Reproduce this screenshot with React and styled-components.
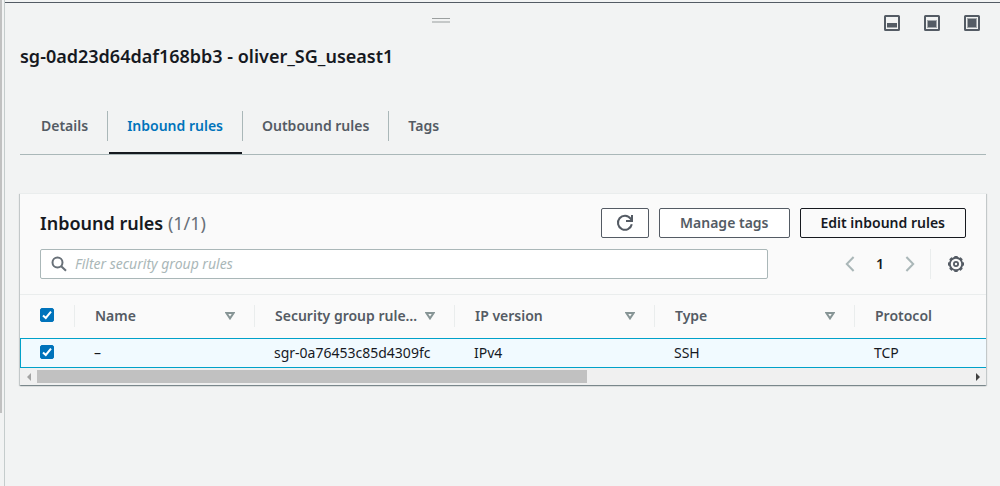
import React, { useState } from "react";
import styled, { createGlobalStyle, css } from "styled-components";

const GlobalStyle = createGlobalStyle`
  *, *::before, *::after { box-sizing: border-box; }
  body {
    margin: 0;
    background: #f2f3f3;
    color: #16191f;
    font-family: "Noto Sans", "Open Sans", sans-serif;
    font-size: 14px;
    line-height: 22px;
  }
  button, input { font: inherit; }
`;

const Page = styled.div`
  display: flex;
  min-height: 100vh;
  overflow: hidden;
`;

const Gutter = styled.div`
  flex: none;
  width: 5px;
  border-right: 1px solid #c5cccc;
`;

const GutterThumb = styled.div`
  width: 2px;
  height: 85vh;
  background: #c1c1c1;
`;

const SplitPanel = styled.section`
  flex: 1;
  min-width: 0;
  margin-top: 2px;
  border-top: 1px solid #545b64;
  padding: 0 14px 20px 15px;
`;

const PanelBar = styled.div`
  display: grid;
  grid-template-columns: 1fr auto 1fr;
  align-items: center;
  height: 40px;
`;

const DragHandle = styled.button`
  grid-column: 2;
  display: flex;
  padding: 0;
  border: 0;
  background: none;
  margin-right: 124px;
  margin-bottom: 5px;
  cursor: row-resize;
`;

const PanelSizes = styled.div`
  justify-self: end;
  display: flex;
  gap: 24px;
  padding-right: 6px;
`;

const IconButton = styled.button`
  display: flex;
  align-items: center;
  justify-content: center;
  padding: 0;
  border: 0;
  background: none;
  color: ${(p) => (p.$muted ? "#aab7b8" : "#545b64")};
  cursor: pointer;
`;

const PanelTitle = styled.h2`
  margin: 1px 0 42px;
  font-size: 18px;
  font-weight: 600;
  line-height: 25px;
`;

const TabList = styled.nav`
  display: flex;
  padding-left: 1px;
  border-bottom: 1px solid #aab7b8;
`;

const Tab = styled.a`
  position: relative;
  display: block;
  padding: 4px 19px 17px 20px;
  color: ${(p) => (p.$active ? "#0073bb" : "#545b64")};
  font-weight: 600;
  text-decoration: none;
  &:not(:first-child)::before {
    content: "";
    position: absolute;
    top: 0;
    left: 0;
    width: 1px;
    height: 30px;
    background: #aab7b8;
  }
  ${(p) =>
    p.$active &&
    css`
      &::after {
        content: "";
        position: absolute;
        left: 2px;
        right: 0;
        bottom: 0;
        height: 2px;
        background: #16191f;
      }
    `}
`;

const Card = styled.div`
  margin-top: 38px;
  border-top: 1px solid #eaeded;
  background: #fafafa;
  box-shadow: 0 1px 1px 0 rgba(0, 28, 36, 0.3), 1px 1px 1px 0 rgba(0, 28, 36, 0.15),
    -1px 1px 1px 0 rgba(0, 28, 36, 0.15);
`;

const CardHeader = styled.div`
  display: flex;
  align-items: center;
  justify-content: space-between;
  padding: 14px 20px 0;
`;

const CardTitle = styled.h3`
  margin: 0;
  font-size: 18px;
  font-weight: 600;
  line-height: 28px;
`;

const Count = styled.span`
  color: #687078;
  font-weight: 400;
`;

const Actions = styled.div`
  display: flex;
  gap: 10px;
`;

const Button = styled.button`
  display: flex;
  align-items: center;
  justify-content: center;
  height: 30px;
  padding: 0 ${(p) => (p.$icon ? 14 : 20)}px;
  border: 1px solid ${(p) => (p.$strong ? "#16191f" : "#545b64")};
  border-radius: 2px;
  background: ${(p) => (p.$strong ? "#fafafa" : "#fff")};
  color: ${(p) => (p.$strong ? "#16191f" : "#545b64")};
  font-weight: 600;
  cursor: pointer;
`;

const Tools = styled.div`
  display: flex;
  align-items: center;
  justify-content: space-between;
  padding: 11px 20px 15px;
`;

const SearchBox = styled.label`
  display: flex;
  align-items: center;
  flex: 0 1 728px;
  height: 30px;
  padding: 0 10px;
  gap: 8px;
  border: 1px solid #aab7b8;
  border-radius: 2px;
  background: #fff;
  color: #687078;
`;

const SearchInput = styled.input`
  flex: 1;
  min-width: 0;
  padding: 0;
  border: 0;
  outline: 0;
  background: none;
  color: #16191f;
  &::placeholder {
    color: #aab7b8;
    font-style: italic;
    opacity: 1;
  }
`;

const Pager = styled.div`
  display: flex;
  align-items: center;
`;

const PageNumber = styled.button`
  width: 50px;
  padding: 0;
  border: 0;
  background: none;
  color: #16191f;
  font-weight: 600;
`;

const Preferences = styled.div`
  margin-left: 15px;
  padding: 0 2px 0 17px;
  height: 30px;
  display: flex;
  align-items: center;
  border-left: 1px solid #eaeded;
`;

const TableScroll = styled.div`
  overflow: hidden;
`;

const Table = styled.table`
  width: 1635px;
  table-layout: fixed;
  border-collapse: separate;
  border-spacing: 0;
`;

const HeadCell = styled.th`
  width: ${(p) => p.$width}px;
  height: 44px;
  padding: 0 0 2px;
  border-top: 1px solid #eaeded;
  text-align: left;
  color: #545b64;
  font-weight: 600;
`;

const HeadInner = styled.div`
  display: flex;
  align-items: center;
  justify-content: space-between;
  height: 22px;
  padding: 0 ${(p) => (p.$first ? 0 : 19)}px 0 20px;
  border-right: 1px solid #eaeded;
  white-space: nowrap;
`;

const Cell = styled.td`
  height: 30px;
  padding: 0 19px;
  border: solid #00a1c9;
  border-width: 1px 0;
  background: #f1faff;
  white-space: nowrap;
  &:first-child { border-left-width: 1px; }
`;

const Check = styled.input`
  appearance: none;
  display: block;
  width: 14px;
  height: 14px;
  margin: 0 0 2px;
  border: 1px solid #0073bb;
  border-radius: 2px;
  background: #fff;
  &:checked {
    background: #0073bb
      url("data:image/svg+xml,%3Csvg xmlns='http://www.w3.org/2000/svg' viewBox='0 0 12 12'%3E%3Cpath d='M2 6.4 4.8 9 10 2.6' fill='none' stroke='white' stroke-width='2'/%3E%3C/svg%3E")
      center / 12px 12px no-repeat;
  }
`;

const ScrollBar = styled.div`
  display: flex;
  align-items: center;
  height: 17px;
  background: #f0f0f0;
`;

const ScrollArrow = styled.button`
  display: flex;
  align-items: center;
  justify-content: center;
  width: 17px;
  height: 17px;
  padding: 0;
  border: 0;
  background: none;
  color: ${(p) => (p.$disabled ? "#a3a3a3" : "#404040")};
`;

const ScrollTrack = styled.div`
  flex: 1;
`;

const ScrollThumb = styled.div`
  width: 59%;
  height: 13px;
  background: #c1c1c1;
`;

const PanelSizeIcon = ({ top, inset }) => (
  <svg width="16" height="16" viewBox="0 0 16 16" aria-hidden="true">
    <rect x="1" y="1" width="14" height="14" rx="0.5" fill="none" stroke="currentColor" strokeWidth="2" />
    <rect x="3" y={top} width="10" height={13 - top} fill="currentColor" opacity="0.5" />
    <rect x={3 + inset} y={top + inset} width={10 - 2 * inset} height={12 - top - inset} fill="currentColor" />
  </svg>
);

const HandleIcon = () => (
  <svg width="18" height="5" viewBox="0 0 18 5" aria-hidden="true">
    <path d="M0 .5h18" stroke="#9b9f9f" />
    <path d="M0 4h18" stroke="#c5c8c8" strokeWidth="2" />
  </svg>
);

const RefreshIcon = () => (
  <svg width="18" height="18" viewBox="0 0 18 18" fill="none" stroke="currentColor" strokeWidth="2" aria-hidden="true">
    <path d="M15.8 10.2A7 7 0 1 1 14.6 4.6L16 6.6" />
    <path d="M16 1v6h-6" />
  </svg>
);

const SearchIcon = () => (
  <svg width="16" height="16" viewBox="0 0 16 16" fill="none" stroke="currentColor" strokeWidth="2" aria-hidden="true">
    <circle cx="6.5" cy="6.5" r="5" />
    <path d="m10.2 10.2 4.8 4.6" />
  </svg>
);

const Chevron = ({ d }) => (
  <svg width="10" height="16" viewBox="0 0 10 16" fill="none" stroke="currentColor" strokeWidth="2" aria-hidden="true">
    <path d={d} />
  </svg>
);

const gearTeeth = Array.from({ length: 8 }, (_, i) => i * 45);

const GearIcon = () => (
  <svg width="16" height="16" viewBox="0 0 16 16" fill="none" stroke="currentColor" aria-hidden="true">
    <circle cx="8" cy="8" r="6.2" strokeWidth="1.9" />
    {gearTeeth.map((angle) => (
      <rect
        key={angle}
        x="6.3"
        y="0"
        width="3.4"
        height="2"
        rx="0.6"
        fill="currentColor"
        stroke="none"
        transform={`rotate(${angle} 8 8)`}
      />
    ))}
    <circle cx="8" cy="8" r="2.1" strokeWidth="1.8" />
  </svg>
);

const SortIcon = () => (
  <svg width="10" height="8" viewBox="0 0 10 8" fill="none" stroke="#879596" strokeWidth="2" aria-hidden="true">
    <path d="M1.4 1h7.2L5 6.4Z" />
  </svg>
);

const ArrowIcon = ({ d }) => (
  <svg width="4" height="8" viewBox="0 0 4 8" fill="currentColor" aria-hidden="true">
    <path d={d} />
  </svg>
);

const tabs = ["Details", "Inbound rules", "Outbound rules", "Tags"];

const columns = [
  { label: "Name", width: 180, value: "–" },
  { label: "Security group rule…", width: 200, value: "sgr-0a76453c85d4309fc" },
  { label: "IP version", width: 200, value: "IPv4" },
  { label: "Type", width: 200, value: "SSH" },
  { label: "Protocol", width: 800, value: "TCP" },
];

export default function App() {
  const [tab, setTab] = useState("Inbound rules");
  const [selected, setSelected] = useState(true);
  const toggle = () => setSelected(!selected);

  return (
    <Page>
      <GlobalStyle />
      <Gutter>
        <GutterThumb />
      </Gutter>
      <SplitPanel>
        <PanelBar>
          <DragHandle aria-label="Resize panel">
            <HandleIcon />
          </DragHandle>
          <PanelSizes>
            <IconButton aria-label="Small panel"><PanelSizeIcon top={8} inset={0} /></IconButton>
            <IconButton aria-label="Medium panel"><PanelSizeIcon top={5} inset={1} /></IconButton>
            <IconButton aria-label="Full panel"><PanelSizeIcon top={3} inset={1} /></IconButton>
          </PanelSizes>
        </PanelBar>
        <PanelTitle>sg-0ad23d64daf168bb3 - oliver_SG_useast1</PanelTitle>
        <TabList>
          {tabs.map((name) => (
            <Tab
              key={name}
              href="#"
              $active={name === tab}
              onClick={(e) => {
                e.preventDefault();
                setTab(name);
              }}
            >
              {name}
            </Tab>
          ))}
        </TabList>
        <Card>
          <CardHeader>
            <CardTitle>
              Inbound rules <Count>(1/1)</Count>
            </CardTitle>
            <Actions>
              <Button $icon aria-label="Refresh"><RefreshIcon /></Button>
              <Button>Manage tags</Button>
              <Button $strong>Edit inbound rules</Button>
            </Actions>
          </CardHeader>
          <Tools>
            <SearchBox>
              <SearchIcon />
              <SearchInput aria-label="Filter security group rules" placeholder="Filter security group rules" />
            </SearchBox>
            <Pager>
              <IconButton $muted aria-label="Previous page"><Chevron d="M8.6 1 1.8 8l6.8 7" /></IconButton>
              <PageNumber>1</PageNumber>
              <IconButton $muted aria-label="Next page"><Chevron d="m1.4 1 6.8 7-6.8 7" /></IconButton>
              <Preferences>
                <IconButton aria-label="Preferences"><GearIcon /></IconButton>
              </Preferences>
            </Pager>
          </Tools>
          <TableScroll>
            <Table>
              <thead>
                <tr>
                  <HeadCell $width={55}>
                    <HeadInner $first>
                      <Check type="checkbox" aria-label="Select all rules" checked={selected} onChange={toggle} />
                    </HeadInner>
                  </HeadCell>
                  {columns.map((c) => (
                    <HeadCell key={c.label} $width={c.width}>
                      <HeadInner>
                        {c.label}
                        <SortIcon />
                      </HeadInner>
                    </HeadCell>
                  ))}
                </tr>
              </thead>
              <tbody>
                <tr>
                  <Cell>
                    <Check type="checkbox" aria-label="Select rule" checked={selected} onChange={toggle} />
                  </Cell>
                  {columns.map((c) => (
                    <Cell key={c.label}>{c.value}</Cell>
                  ))}
                </tr>
              </tbody>
            </Table>
          </TableScroll>
          <ScrollBar>
            <ScrollArrow $disabled aria-label="Scroll left"><ArrowIcon d="M4 0v8L0 4Z" /></ScrollArrow>
            <ScrollTrack>
              <ScrollThumb />
            </ScrollTrack>
            <ScrollArrow aria-label="Scroll right"><ArrowIcon d="M0 0v8l4-4Z" /></ScrollArrow>
          </ScrollBar>
        </Card>
      </SplitPanel>
    </Page>
  );
}
